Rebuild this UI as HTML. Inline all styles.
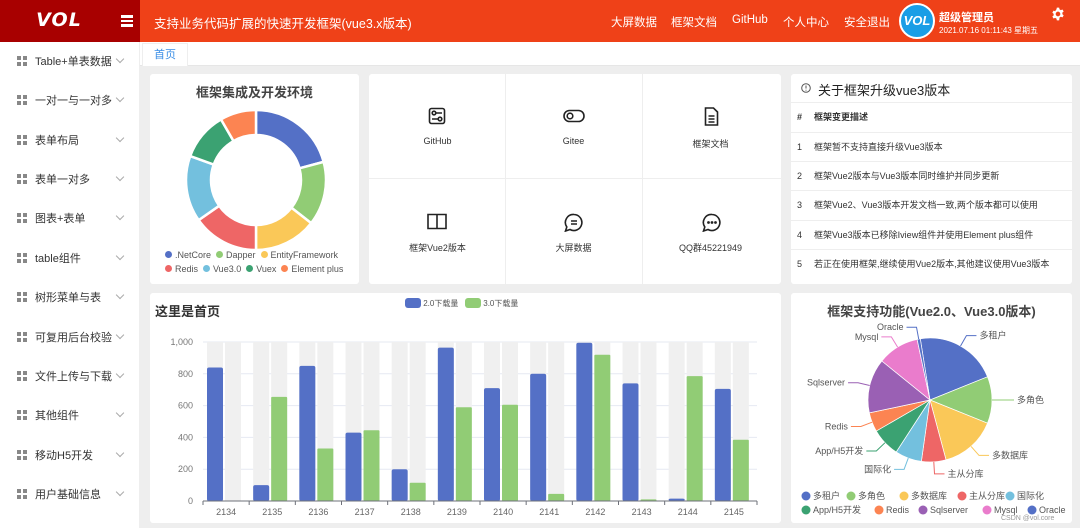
<!DOCTYPE html>
<html><head><meta charset="utf-8">
<style>
*{margin:0;padding:0;box-sizing:border-box}
body{width:1080px;height:528px;overflow:hidden;background:#eee;font-family:"Liberation Sans","Noto Sans CJK SC",sans-serif;position:relative}
.hdr{position:absolute;left:0;top:0;width:1080px;height:42px;background:#ef4118;color:#fff}
.logo{position:absolute;left:0;top:0;width:140px;height:42px;background:#a80000;color:#fff;font:italic bold 19px "DejaVu Sans",sans-serif;letter-spacing:1px;padding:9px 0 0 0;text-align:center;padding-right:22px}
.menu{position:absolute;left:121px;top:15px;width:12px;height:12px}
.menu i{display:block;height:2.5px;background:#fff;margin-bottom:2px}
.ttl{position:absolute;left:154px;top:13px;font-size:12.5px}
.nav{position:absolute;top:14px;font-size:11.5px}
.av{position:absolute;left:899px;top:3px;width:36px;height:36px;border-radius:50%;background:#1a9ee6;border:2px solid #fff;color:#fff;font:italic bold 13px "Liberation Sans",sans-serif;text-align:center;line-height:32px}
.side{position:absolute;left:0;top:42px;width:139px;height:486px;background:#fff}
.it{position:absolute;left:17px;font-size:11px;color:#333;height:14px;line-height:14px}
.it b{display:inline-block;width:10px;height:10px;vertical-align:-1px;margin-right:8px;background:linear-gradient(#888,#888) 0 0/4px 4px no-repeat,linear-gradient(#888,#888) 6px 0/4px 4px no-repeat,linear-gradient(#888,#888) 0 6px/4px 4px no-repeat,linear-gradient(#888,#888) 6px 6px/4px 4px no-repeat}
.chev{position:absolute;left:117px;width:6px;height:6px;border-right:1px solid #aaa;border-bottom:1px solid #aaa;transform:rotate(45deg)}
.tabs{position:absolute;left:140px;top:42px;width:940px;height:24px;background:#fff;border-bottom:1px solid #e6e6e6}
.tab{position:absolute;left:2px;top:1px;width:46px;height:23px;border:1px solid #eee;border-bottom:none;color:#3a8ee6;font-size:11px;text-align:center;line-height:22px;background:#fff}
.p{position:absolute;background:#fff;border-radius:3px}
.g{position:absolute;font-size:9px;color:#333;text-align:center;width:137px}
.tb{position:absolute;left:0;width:281px;font-size:9px;color:#333;border-top:1px solid #eee;height:29px;line-height:29px}
.tb span{position:absolute;left:6px}
.tb em{font-style:normal;position:absolute;left:23px}
.dt{display:inline-block;width:7px;height:7px;border-radius:50%;margin-right:3px;vertical-align:0}
</style></head><body>
<div class="hdr">
<div class="logo">VOL</div>
<div class="menu"><i></i><i></i><i></i></div>
<div class="ttl">支持业务代码扩展的快速开发框架(vue3.x版本)</div>
<div class="nav" style="left:611px">大屏数据</div>
<div class="nav" style="left:671px">框架文档</div>
<div class="nav" style="left:732px">GitHub</div>
<div class="nav" style="left:783px">个人中心</div>
<div class="nav" style="left:844px">安全退出</div>
<div class="av">VOL</div>
<div style="position:absolute;left:939px;top:9px;font-size:11px;font-weight:bold">超级管理员</div>
<div style="position:absolute;left:939px;top:25px;font-size:8px">2021.07.16 01:11:43 星期五</div>
<svg style="position:absolute;left:1051px;top:7px" width="14" height="14" viewBox="0 0 24 24"><path fill="#fff" d="M10 1h4l.6 3a8 8 0 0 1 2.2 1.3l2.9-1 2 3.4-2.3 2a8 8 0 0 1 0 2.6l2.3 2-2 3.4-2.9-1a8 8 0 0 1-2.2 1.3L14 23h-4l-.6-3a8 8 0 0 1-2.2-1.3l-2.9 1-2-3.4 2.3-2a8 8 0 0 1 0-2.6l-2.3-2 2-3.4 2.9 1A8 8 0 0 1 9.4 4zM12 8a4 4 0 1 0 0 8 4 4 0 0 0 0-8z"/></svg>
</div>
<div class="side">
<div class="it" style="top:13px"><b></b>Table+单表数据</div><div class="chev" style="top:14px"></div>
<div class="it" style="top:52px"><b></b>一对一与一对多</div><div class="chev" style="top:53px"></div>
<div class="it" style="top:92px"><b></b>表单布局</div><div class="chev" style="top:93px"></div>
<div class="it" style="top:131px"><b></b>表单一对多</div><div class="chev" style="top:132px"></div>
<div class="it" style="top:170px"><b></b>图表+表单</div><div class="chev" style="top:171px"></div>
<div class="it" style="top:210px"><b></b>table组件</div><div class="chev" style="top:211px"></div>
<div class="it" style="top:249px"><b></b>树形菜单与表</div><div class="chev" style="top:250px"></div>
<div class="it" style="top:289px"><b></b>可复用后台校验</div><div class="chev" style="top:290px"></div>
<div class="it" style="top:328px"><b></b>文件上传与下载</div><div class="chev" style="top:329px"></div>
<div class="it" style="top:367px"><b></b>其他组件</div><div class="chev" style="top:368px"></div>
<div class="it" style="top:407px"><b></b>移动H5开发</div><div class="chev" style="top:408px"></div>
<div class="it" style="top:446px"><b></b>用户基础信息</div><div class="chev" style="top:447px"></div>
</div>
<div class="tabs"><div class="tab">首页</div></div>

<div class="p" style="left:150px;top:74px;width:209px;height:210px">
<div style="position:absolute;top:8px;width:209px;text-align:center;font-size:13px;font-weight:bold;color:#444">框架集成及开发环境</div>
<svg id="donut" style="position:absolute;left:36px;top:36px" width="140" height="140" viewBox="0 0 140 140"></svg>
<div style="position:absolute;left:15px;top:175px;font-size:9px;color:#555;line-height:13.5px;white-space:nowrap">
<span class="dt" style="background:#5470c6"></span>.NetCore&nbsp; <span class="dt" style="background:#91cc75"></span>Dapper&nbsp; <span class="dt" style="background:#fac858"></span>EntityFramework<br>
<span class="dt" style="background:#ee6666"></span>Redis&nbsp; <span class="dt" style="background:#73c0de"></span>Vue3.0&nbsp; <span class="dt" style="background:#3ba272"></span>Vuex&nbsp; <span class="dt" style="background:#fc8452"></span>Element plus</div>
</div>

<div class="p" style="left:369px;top:74px;width:412px;height:210px">
<div style="position:absolute;left:136px;top:0;width:1px;height:210px;background:#eee"></div>
<div style="position:absolute;left:273px;top:0;width:1px;height:210px;background:#eee"></div>
<div style="position:absolute;left:0;top:104px;width:412px;height:1px;background:#eee"></div>
<svg style="position:absolute;left:59px;top:33px" width="18" height="18" viewBox="0 0 18 18" fill="none" stroke="#222" stroke-width="1.6"><rect x="1.5" y="1.5" width="15" height="15" rx="2"/><circle cx="6" cy="6" r="1.8"/><circle cx="12" cy="12" r="1.8"/><path d="M8 6h6M4 12h6"/></svg>
<div class="g" style="left:0;top:62px">GitHub</div>
<svg style="position:absolute;left:194px;top:35px" width="22" height="14" viewBox="0 0 22 14" fill="none" stroke="#222" stroke-width="1.6"><rect x="1" y="1.5" width="20" height="11" rx="5.5"/><circle cx="7" cy="7" r="2.8"/></svg>
<div class="g" style="left:136px;top:62px">Gitee</div>
<svg style="position:absolute;left:335px;top:33px" width="15" height="19" viewBox="0 0 15 19" fill="none" stroke="#222" stroke-width="1.6"><path d="M1.5 1h8l4 4v13h-12z"/><path d="M4.5 9h6M4.5 12h6M4.5 15h6"/></svg>
<div class="g" style="left:273px;top:63px">框架文档</div>
<svg style="position:absolute;left:58px;top:139px" width="20" height="17" viewBox="0 0 20 17" fill="none" stroke="#222" stroke-width="1.6"><path d="M1 1.5h18v14H1zM10 1.5v14"/></svg>
<div class="g" style="left:0;top:167px">框架Vue2版本</div>
<svg style="position:absolute;left:195px;top:139px" width="20" height="19" viewBox="0 0 20 19" fill="none" stroke="#222" stroke-width="1.6"><path d="M10 1.5a8 8 0 1 1-4 15l-4.5 1.5 1.3-4A8 8 0 0 1 10 1.5z"/><path d="M7 8h6M7 11h6"/></svg>
<div class="g" style="left:136px;top:167px">大屏数据</div>
<svg style="position:absolute;left:333px;top:139px" width="20" height="19" viewBox="0 0 20 19" fill="none" stroke="#222" stroke-width="1.6"><path d="M10 1.5a8 8 0 1 1-4 15l-4.5 1.5 1.3-4A8 8 0 0 1 10 1.5z"/><circle cx="6.5" cy="9.5" r=".6" fill="#222"/><circle cx="10" cy="9.5" r=".6" fill="#222"/><circle cx="13.5" cy="9.5" r=".6" fill="#222"/></svg>
<div class="g" style="left:273px;top:167px">QQ群45221949</div>
</div>

<div class="p" style="left:791px;top:74px;width:281px;height:210px">
<svg style="position:absolute;left:10px;top:9px" width="10" height="10" viewBox="0 0 10 10" fill="none" stroke="#555"><circle cx="5" cy="5" r="4.3"/><path d="M5 2.5v3M5 6.8v.8"/></svg>
<div style="position:absolute;left:27px;top:6px;font-size:13px;color:#222">关于框架升级vue3版本</div>
<div class="tb" style="top:28px;font-weight:bold"><span>#</span><em>框架变更描述</em></div>
<div class="tb" style="top:58px"><span>1</span><em>框架暂不支持直接升级Vue3版本</em></div>
<div class="tb" style="top:87px"><span>2</span><em>框架Vue2版本与Vue3版本同时维护并同步更新</em></div>
<div class="tb" style="top:116px"><span>3</span><em>框架Vue2、Vue3版本开发文档一致,两个版本都可以使用</em></div>
<div class="tb" style="top:146px"><span>4</span><em>框架Vue3版本已移除Iview组件并使用Element plus组件</em></div>
<div class="tb" style="top:175px"><span>5</span><em>若正在使用框架,继续使用Vue2版本,其他建议使用Vue3版本</em></div>
</div>

<div class="p" style="left:150px;top:293px;width:631px;height:230px">
<div style="position:absolute;left:5px;top:8px;font-size:13px;font-weight:bold;color:#333">这里是首页</div>
<div style="position:absolute;left:255px;top:5px;font-size:8px;color:#555;white-space:nowrap">
<span style="display:inline-block;width:16px;height:10px;border-radius:3px;background:#5470c6;vertical-align:-2px"></span> 2.0下载量 &nbsp;
<span style="display:inline-block;width:16px;height:10px;border-radius:3px;background:#91cc75;vertical-align:-2px"></span> 3.0下载量</div>
</div>
<svg id="bar" style="position:absolute;left:150px;top:293px" width="631" height="230"></svg>

<div class="p" style="left:791px;top:293px;width:281px;height:230px">
<div style="position:absolute;top:8px;width:281px;text-align:center;font-size:13px;font-weight:bold;color:#444">框架支持功能(Vue2.0、Vue3.0版本)</div>
<div style="position:absolute;left:210px;top:222px;font-size:7px;color:#999">CSDN @vol.core</div>
</div>
<svg id="pie" style="position:absolute;left:791px;top:293px" width="281" height="230"></svg>

<script>
var NS="http://www.w3.org/2000/svg";
function el(p,t,a,txt){var e=document.createElementNS(NS,t);for(var k in a)e.setAttribute(k,a[k]);if(txt!=null)e.textContent=txt;p.appendChild(e);return e;}
function pt(cx,cy,r,a){a=(a-90)*Math.PI/180;return [cx+r*Math.cos(a),cy+r*Math.sin(a)];}
function arc(cx,cy,r0,r1,a0,a1){var l=(a1-a0)>180?1:0,p1=pt(cx,cy,r1,a0),p2=pt(cx,cy,r1,a1),p3=pt(cx,cy,r0,a1),p4=pt(cx,cy,r0,a0);
return "M"+p1+"A"+r1+","+r1+" 0 "+l+" 1 "+p2+"L"+p3+(r0>0?"A"+r0+","+r0+" 0 "+l+" 0 "+p4:"")+"Z";}
var d=document.getElementById("donut");
var ds=[[0,75,"#5470c6"],[75,128,"#91cc75"],[128,180,"#fac858"],[180,235,"#ee6666"],[235,290,"#73c0de"],[290,330,"#3ba272"],[330,360,"#fc8452"]];
ds.forEach(function(s){el(d,"path",{d:arc(70,70,45,70,s[0],s[1]),fill:s[2],stroke:"#fff","stroke-width":"2.5","stroke-linejoin":"round"});});
var b=document.getElementById("bar");
var x0=53,x1=607,y0=208,yT=49,cw=(x1-x0)/12;
[0,200,400,600,800,1000].forEach(function(v,i){var y=y0-(y0-yT)*v/1000;
 if(v>0)el(b,"line",{x1:x0,x2:x1,y1:y,y2:y,stroke:"#e6e9f2","stroke-width":1});
 el(b,"text",{x:x0-10,y:y+3,"text-anchor":"end","font-size":"9",fill:"#777","font-family":"Liberation Sans"},v==1000?"1,000":v);});
var A=[840,100,850,430,200,965,710,800,995,740,15,705],B=[0,655,330,445,115,590,605,45,920,10,785,385];
for(var i=0;i<12;i++){var cx=x0+cw*i;var bw=16;var xa=cx+4,xb=cx+22;
 el(b,"rect",{x:xa,y:yT,width:bw,height:y0-yT,fill:"#f0f0f0"});el(b,"rect",{x:xb,y:yT,width:bw,height:y0-yT,fill:"#f0f0f0"});
 var ha=(y0-yT)*A[i]/1000,hb=(y0-yT)*B[i]/1000;
 el(b,"rect",{x:xa,y:y0-ha,width:bw,height:ha,fill:"#5470c6",rx:2});
 el(b,"rect",{x:xb,y:y0-hb,width:bw,height:hb,fill:"#91cc75",rx:1});
 el(b,"line",{x1:cx,x2:cx,y1:y0,y2:y0+4,stroke:"#6e7079"});
 el(b,"text",{x:cx+cw/2,y:y0+14,"text-anchor":"middle","font-size":"9",fill:"#666","font-family":"Liberation Sans"},2134+i);}
el(b,"line",{x1:x0,x2:x1,y1:y0,y2:y0,stroke:"#6e7079"});el(b,"line",{x1:x1,x2:x1,y1:y0,y2:y0+4,stroke:"#6e7079"});
var p=document.getElementById("pie"),pcx=139,pcy=107,pr=62;
var ps=[[-9,68,"#5470c6","多租户"],[68,112,"#91cc75","多角色"],[112,165,"#fac858","多数据库"],[165,188,"#ee6666","主从分库"],[188,213,"#73c0de","国际化"],[213,240,"#3ba272","App/H5开发"],[240,258,"#fc8452","Redis"],[258,309,"#9a60b4","Sqlserver"],[309,348,"#ea7ccc","Mysql"],[348,351,"#5470c6","Oracle"]];
ps.forEach(function(s){el(p,"path",{d:arc(pcx,pcy,0,pr,s[0],s[1]),fill:s[2],stroke:"#fff","stroke-width":"0.7"});
 var m=(s[0]+s[1])/2,a=pt(pcx,pcy,pr,m),c=pt(pcx,pcy,pr+12,m),right=Math.sin(m*Math.PI/180)>=0,ex=c[0]+(right?10:-10);
 el(p,"polyline",{points:a+" "+c+" "+ex+","+c[1],fill:"none",stroke:s[2],"stroke-width":"1"});
 el(p,"text",{x:ex+(right?3:-3),y:c[1]+3,"text-anchor":right?"start":"end","font-size":"9",fill:"#555","font-family":"Liberation Sans,Noto Sans CJK SC"},s[3]);});
var lx=[[30,200],[75,200],[128,200],[186,200],[234,200],[30,214],[103,214],[147,214],[211,214],[256,214]];
ps.forEach(function(s,i){var x=lx[i][0]-20,y=lx[i][1]+3;
 el(p,"circle",{cx:x+5,cy:y,r:4.5,fill:s[2]});
 el(p,"text",{x:x+12,y:y+3,"font-size":"9",fill:"#555","font-family":"Liberation Sans,Noto Sans CJK SC"},s[3]);});
</script>
</body></html>
